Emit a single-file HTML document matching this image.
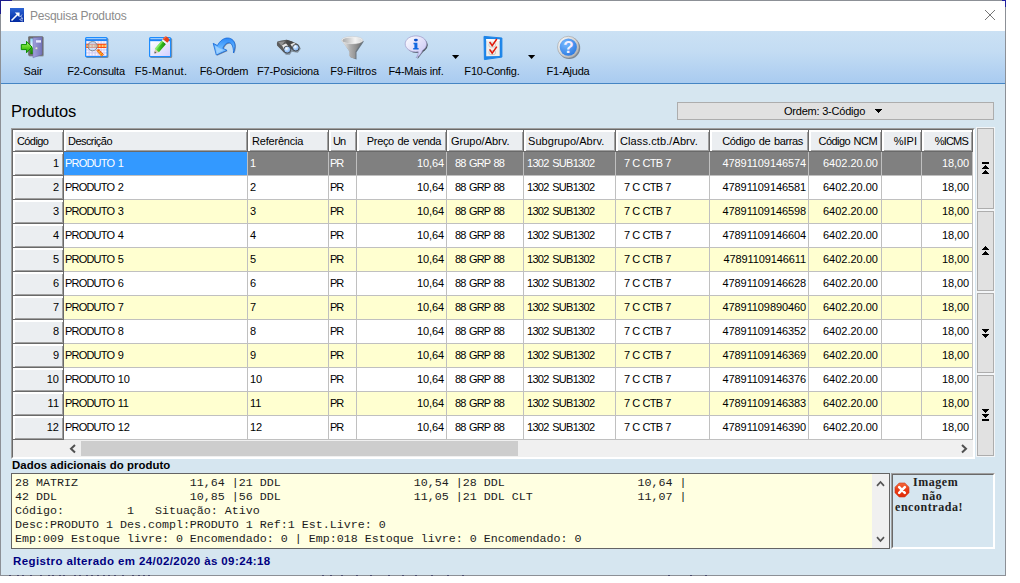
<!DOCTYPE html>
<html lang="pt-BR"><head><meta charset="utf-8"><title>Pesquisa Produtos</title>
<style>
html,body{margin:0;padding:0;background:#fff;}
body{width:1020px;height:583px;position:relative;overflow:hidden;font-family:"Liberation Sans",sans-serif;font-size:11px;color:#000;}
div{box-sizing:border-box;}
.abs{position:absolute;}
#win{position:absolute;left:0;top:0;width:1006px;height:576px;background:#d6e6f0;border:1px solid #8c9096;}
#title{position:absolute;left:1px;top:1px;width:1004px;height:30px;background:#fff;}
#title .t{position:absolute;left:29px;top:8px;font-size:12px;color:#8c8c8c;letter-spacing:-0.25px}
#tb{position:absolute;left:1px;top:31px;width:1004px;height:53px;background:linear-gradient(#cbe1f4 0%,#c3dcf3 40%,#a9cbf0 100%);border-bottom:1px solid #4585c4;}
.tbl{position:absolute;top:34px;font-size:11px;white-space:nowrap;transform:translateX(-50%);letter-spacing:-0.2px;}
#h1{position:absolute;left:11px;top:102px;font-size:16.5px;letter-spacing:-0.1px;line-height:18px}
#ordem{position:absolute;left:677px;top:102px;width:317px;height:18px;background:#e1e1e1;border:1px solid #adadad;}
#ordem span{position:absolute;left:106px;top:1px;line-height:15px;white-space:nowrap;letter-spacing:-0.22px}
#grid{position:absolute;left:11px;top:128px;width:964px;height:331px;background:#fff;border:1px solid;border-color:#a0a0a0 #fff #fff #a0a0a0;}
#grid:before{content:"";position:absolute;left:0;top:0;right:0;bottom:0;border:1px solid;border-color:#696969 #fff #fff #696969;}
.hdr{position:absolute;top:130px;height:22px;left:13px;}
.h{position:absolute;top:0;height:22px;background:#ebeef1;border-right:1px solid #696969;border-bottom:1px solid #696969;box-shadow:inset 2px 2px 0 #fff,inset -1px -1px 0 #a0a0a0;line-height:22px;padding-left:4px;white-space:nowrap;overflow:hidden;letter-spacing:-0.4px;}
.row{position:absolute;left:13px;width:960px;height:24px;}
.row.even{background:#fff;}
.row.odd{background:#ffffd0;}
.row.sel{background:#808080;color:#fff;}
.row .c{position:absolute;top:0;height:24px;line-height:23px;border-right:1px solid #c0c0c0;border-bottom:1px solid #c0c0c0;white-space:nowrap;overflow:hidden;padding:0 2px;letter-spacing:-0.4px;}
.row .c0{background:#ebeef1;color:#000;text-align:right;border-right:1px solid #696969;border-bottom:1px solid #696969;box-shadow:inset 2px 2px 0 #fff,inset -1px -1px 0 #a0a0a0;padding-right:4px;letter-spacing:0;}
.row .c1{padding-left:1px;letter-spacing:-0.8px;word-spacing:1.2px}
.sel .c1{background:#3399ff;}
.d{letter-spacing:-0.1px}
.row .c2{padding-left:2px;letter-spacing:0}
.row .c3{padding-left:1px;letter-spacing:-1.2px}
.row .c4{text-align:right;letter-spacing:-0.1px}
.row .c5{padding-left:8px;letter-spacing:-0.85px;word-spacing:1.2px}
.row .c6{padding-left:3px;letter-spacing:-0.7px;word-spacing:1.1px}
.row .c7{padding-left:8px;letter-spacing:-0.8px;word-spacing:0.8px}
.row .c8{text-align:right;letter-spacing:-0.1px}
.row .c9{text-align:right;letter-spacing:0;padding-right:3px}
.row .c11{text-align:right;padding-right:3px;letter-spacing:-0.1px}
.h.c4,.h.c8,.h.c9,.h.c10,.h.c11{text-align:right;padding-right:4px}
.h.c4,.h.c8{padding-right:5px}
.c0{left:0px;width:51px;}
.c1{left:51px;width:184px;}
.c2{left:235px;width:81px;}
.c3{left:316px;width:28px;}
.c4{left:344px;width:90px;}
.c5{left:434px;width:77px;}
.c6{left:511px;width:92px;}
.c7{left:603px;width:94px;}
.c8{left:697px;width:99px;}
.c9{left:796px;width:73px;}
.c10{left:869px;width:40px;}
.c11{left:909px;width:51px;}
#hs{position:absolute;left:13px;top:440px;width:960px;height:17px;background:#f0f0f0;}
#hs .thumb{position:absolute;left:68px;top:1px;width:437px;height:15px;background:#cdcdcd;}
#nbp{position:absolute;left:976px;top:127px;width:19px;height:330px;background:#f3f5f7;}
.nb{position:absolute;left:977px;width:17px;background:#e1e1e1;border:1px solid #adadad;}
#lbl{position:absolute;left:12px;top:459px;font-weight:bold;font-size:11.4px;line-height:13px;letter-spacing:0.05px}
#memo{position:absolute;left:11px;top:473px;width:879px;height:76px;background:#ffffe1;border:1px solid #646464;}
#memo pre{margin:0;position:absolute;left:3px;top:2px;font-family:"Liberation Mono",monospace;font-size:11.67px;line-height:14px;color:#1c1c1c}
#vs{position:absolute;left:872px;top:474px;width:17px;height:74px;background:#f0f0f0;}
#img{position:absolute;left:891px;top:473px;width:104px;height:76px;border:1px solid;border-color:#a0a0a0 #fff #fff #a0a0a0;}
#img:before{content:"";position:absolute;left:0;top:0;right:0;bottom:0;border:1px solid;border-color:#696969 #fff #fff #696969;}
#imgt .tx{position:absolute;font-family:"Liberation Serif",serif;font-weight:bold;font-size:12px;line-height:12px;white-space:nowrap;letter-spacing:0.55px;color:#222}
#status{position:absolute;left:13px;top:555px;font-weight:bold;color:#000080;font-size:11.5px;letter-spacing:0.4px;line-height:13px}
</style></head><body>
<div id="win"></div>
<div id="title"><div class="t">Pesquisa Produtos</div></div>
<svg class="abs" style="left:10px;top:8px" width="14" height="14" viewBox="0 0 14 14"><rect width="14" height="14" fill="url(#gIcon)"/><path d="M1.500,12.500 L8,6" stroke="#fff" stroke-width="1.600"/><path d="M4.800,4.500 L9.600,4.400 L9.500,9.200 Z" fill="#fff"/><path d="M10,9 l2,-2.500 M9.500,11.500 l3,-1 M10.500,12.500 l2.500,.5 M11.500,8.500 l1,3" stroke="#b8c8f0" stroke-width=".9"/></svg>
<svg class="abs" style="left:984px;top:9px" width="12" height="12" viewBox="0 0 12 12"><path d="M1,1 L11,11 M11,1 L1,11" stroke="#767676" stroke-width="1"/></svg>
<div class="abs" style="left:0;top:0;width:12px;height:1px;background:#1c1c8c"></div>
<div class="abs" style="left:0;top:0;width:1px;height:14px;background:#1c1c8c"></div>
<div class="abs" style="left:1002px;top:0;width:4px;height:1px;background:#2020a0"></div>
<div class="abs" style="left:1005px;top:0;width:1px;height:7px;background:#2020a0"></div>
<div id="tb">
<div class="tbl" style="left:32px">Sair</div>
<div class="tbl" style="left:95px">F2-Consulta</div>
<div class="tbl" style="left:160px;letter-spacing:0.25px">F5-Manut.</div>
<div class="tbl" style="left:223px">F6-Ordem</div>
<div class="tbl" style="left:287px">F7-Posiciona</div>
<div class="tbl" style="left:352.5px;letter-spacing:0px">F9-Filtros</div>
<div class="tbl" style="left:415px">F4-Mais inf.</div>
<div class="tbl" style="left:491px">F10-Config.</div>
<div class="tbl" style="left:567px">F1-Ajuda</div>
</div>
<svg width="0" height="0" style="position:absolute"><defs>
<linearGradient id="gGreen" x1="0" y1="0" x2="0" y2="1"><stop offset="0" stop-color="#b4f878"/><stop offset=".55" stop-color="#58d020"/><stop offset="1" stop-color="#28a808"/></linearGradient>
<linearGradient id="gDoor" x1="0" y1="0" x2="1" y2="0"><stop offset="0" stop-color="#a0a0dc"/><stop offset="1" stop-color="#7474b8"/></linearGradient>
<linearGradient id="gSky" x1="0" y1="0" x2="0" y2="1"><stop offset="0" stop-color="#8fd8ff"/><stop offset=".55" stop-color="#ffffff"/><stop offset=".6" stop-color="#30b010"/><stop offset="1" stop-color="#188000"/></linearGradient>
<linearGradient id="gWin" x1="0" y1="0" x2="1" y2="1"><stop offset="0" stop-color="#ffffff"/><stop offset="1" stop-color="#d4d0ff"/></linearGradient>
<linearGradient id="gBlueBar" x1="0" y1="0" x2="0" y2="1"><stop offset="0" stop-color="#7cc0ff"/><stop offset=".5" stop-color="#1070e8"/><stop offset="1" stop-color="#1c8cff"/></linearGradient>
<linearGradient id="gPencil" x1="0" y1="0" x2="1" y2="1"><stop offset="0" stop-color="#7ee860"/><stop offset=".5" stop-color="#38c020"/><stop offset="1" stop-color="#188808"/></linearGradient>
<linearGradient id="gUndo" x1="0" y1="0" x2="0" y2="1"><stop offset="0" stop-color="#2c88f8"/><stop offset=".45" stop-color="#58acff"/><stop offset="1" stop-color="#98d0ff"/></linearGradient>
<linearGradient id="gFunnel" x1="0" y1="0" x2="1" y2="0"><stop offset="0" stop-color="#f8f8f8"/><stop offset=".4" stop-color="#b0b0b0"/><stop offset="1" stop-color="#6c6c6c"/></linearGradient>
<linearGradient id="gFunnelTop" x1="0" y1="0" x2="1" y2="0"><stop offset="0" stop-color="#a8a8a8"/><stop offset=".65" stop-color="#f4f4f4"/><stop offset="1" stop-color="#d8d8d8"/></linearGradient>
<radialGradient id="gLens" cx=".4" cy=".35" r=".7"><stop offset="0" stop-color="#ffffff"/><stop offset=".5" stop-color="#a8d0ff"/><stop offset="1" stop-color="#78a8e8"/></radialGradient>
<linearGradient id="gBubble" x1="0" y1="0" x2="1" y2="1"><stop offset="0" stop-color="#ffffff"/><stop offset="1" stop-color="#c4c0f4"/></linearGradient>
<radialGradient id="gHelp" cx=".35" cy=".3" r=".8"><stop offset="0" stop-color="#78b8ff"/><stop offset="1" stop-color="#2878e0"/></radialGradient>
<linearGradient id="gRim" x1="0" y1="0" x2="1" y2="1"><stop offset="0" stop-color="#ffffff"/><stop offset="1" stop-color="#a8a8a8"/></linearGradient>
<linearGradient id="gIcon" x1="0" y1="0" x2="0" y2="1"><stop offset="0" stop-color="#2c64d4"/><stop offset="1" stop-color="#0028a0"/></linearGradient>
<filter id="sh" x="-20%" y="-20%" width="150%" height="150%"><feGaussianBlur stdDeviation="0.7"/></filter>
</defs></svg><svg class="abs" style="left:16px;top:32px" width="32" height="32" viewBox="0 0 32 32" >
<rect x="12.8" y="5" width="15" height="19.5" rx="1" fill="#555" opacity=".45" filter="url(#sh)"/>
<rect x="12.2" y="4.2" width="15" height="19.6" rx="1" fill="#6c6c6c"/>
<rect x="14.3" y="6.5" width="4" height="15.5" fill="url(#gSky)"/>
<path d="M17,5.8 L26,5 L26,22.5 L17,25.8 Z" fill="url(#gDoor)" stroke="#6c6cb0" stroke-width=".5"/>
<rect x="20" y="8.2" width="5" height="2.4" fill="#e8e8ff"/>
<circle cx="20.4" cy="16.3" r="1.2" fill="#e4e4e4" stroke="#8080a0" stroke-width=".4"/>
<path d="M5.3,12.6 L10.5,12.6 L10.5,9.3 L16,15 L10.5,20.8 L10.5,17.6 L5.3,17.6 Z" fill="url(#gGreen)" stroke="#0c9000" stroke-width="1" stroke-linejoin="round"/>
</svg><svg class="abs" style="left:80px;top:32px" width="32" height="32" viewBox="0 0 32 32" >
<rect x="6" y="6" width="22.5" height="20" rx="1.5" fill="#444" opacity=".5" filter="url(#sh)"/>
<rect x="5" y="5" width="22.6" height="20.2" rx="1.5" fill="#1c8cff"/>
<rect x="6.2" y="6.3" width="20.2" height="2.6" fill="url(#gBlueBar)"/>
<rect x="6.5" y="6.4" width="19.6" height=".8" fill="#c8e4ff"/>
<rect x="6.2" y="9" width="20.2" height="15" fill="#cfc8f0"/>
<rect x="6.6" y="9.3" width="2" height="2" fill="#fff" opacity=".85"/><rect x="9.6" y="9.3" width="2" height="2" fill="#fff" opacity=".85"/><rect x="12.6" y="9.3" width="2" height="2" fill="#fff" opacity=".85"/><rect x="15.6" y="9.3" width="2" height="2" fill="#fff" opacity=".85"/><rect x="18.6" y="9.3" width="2" height="2" fill="#fff" opacity=".85"/><rect x="21.6" y="9.3" width="2" height="2" fill="#fff" opacity=".85"/><rect x="24.4" y="9.3" width="2" height="2" fill="#fff" opacity=".85"/><rect x="6.6" y="12.3" width="2" height="2" fill="#fff" opacity=".85"/><rect x="9.6" y="12.3" width="2" height="2" fill="#fff" opacity=".85"/><rect x="12.6" y="12.3" width="2" height="2" fill="#fff" opacity=".85"/><rect x="15.6" y="12.3" width="2" height="2" fill="#fff" opacity=".85"/><rect x="18.6" y="12.3" width="2" height="2" fill="#fff" opacity=".85"/><rect x="21.6" y="12.3" width="2" height="2" fill="#fff" opacity=".85"/><rect x="24.4" y="12.3" width="2" height="2" fill="#fff" opacity=".85"/><rect x="6.6" y="15.4" width="2" height="2" fill="#fff" opacity=".85"/><rect x="9.6" y="15.4" width="2" height="2" fill="#fff" opacity=".85"/><rect x="12.6" y="15.4" width="2" height="2" fill="#fff" opacity=".85"/><rect x="15.6" y="15.4" width="2" height="2" fill="#fff" opacity=".85"/><rect x="18.6" y="15.4" width="2" height="2" fill="#fff" opacity=".85"/><rect x="21.6" y="15.4" width="2" height="2" fill="#fff" opacity=".85"/><rect x="24.4" y="15.4" width="2" height="2" fill="#fff" opacity=".85"/><rect x="6.6" y="18.4" width="2" height="2" fill="#fff" opacity=".85"/><rect x="9.6" y="18.4" width="2" height="2" fill="#fff" opacity=".85"/><rect x="12.6" y="18.4" width="2" height="2" fill="#fff" opacity=".85"/><rect x="15.6" y="18.4" width="2" height="2" fill="#fff" opacity=".85"/><rect x="18.6" y="18.4" width="2" height="2" fill="#fff" opacity=".85"/><rect x="21.6" y="18.4" width="2" height="2" fill="#fff" opacity=".85"/><rect x="24.4" y="18.4" width="2" height="2" fill="#fff" opacity=".85"/><rect x="6.6" y="21.4" width="2" height="2" fill="#fff" opacity=".85"/><rect x="9.6" y="21.4" width="2" height="2" fill="#fff" opacity=".85"/><rect x="12.6" y="21.4" width="2" height="2" fill="#fff" opacity=".85"/><rect x="15.6" y="21.4" width="2" height="2" fill="#fff" opacity=".85"/><rect x="18.6" y="21.4" width="2" height="2" fill="#fff" opacity=".85"/><rect x="21.6" y="21.4" width="2" height="2" fill="#fff" opacity=".85"/><rect x="24.4" y="21.4" width="2" height="2" fill="#fff" opacity=".85"/>
<rect x="6.2" y="11.8" width="20.2" height="4.2" fill="#ff4a10"/>
<g fill="#ffd070"><rect x="6.6" y="12.8" width="2" height="2.2"/><rect x="9.6" y="12.8" width="2" height="2.2"/><rect x="12.6" y="12.8" width="2" height="2.2"/><rect x="15.6" y="12.8" width="2" height="2.2"/><rect x="18.6" y="12.8" width="2" height="2.2"/><rect x="21.6" y="12.8" width="2" height="2.2"/><rect x="24.4" y="12.8" width="2" height="2.2"/></g>
<circle cx="12.6" cy="14.2" r="4.6" fill="#b8e0ff" fill-opacity=".55" stroke="#808890" stroke-width="1"/>
<path d="M16.6,18.6 L18.4,17.2 L23.6,22.6 L21.6,24.4 Z" fill="#ffb020" stroke="#e04808" stroke-width=".6"/>
<path d="M18,19 L19.6,17.8 M19.6,20.8 L21.2,19.4 M21.2,22.6 L22.8,21.2" stroke="#e83808" stroke-width=".9"/>
</svg><svg class="abs" style="left:144px;top:32px" width="32" height="32" viewBox="0 0 32 32" >
<rect x="6" y="6" width="22.2" height="20" rx="1.5" fill="#444" opacity=".5" filter="url(#sh)"/>
<rect x="5" y="5" width="22.2" height="20.2" rx="1.5" fill="#1c8cff"/>
<rect x="6.2" y="6.3" width="19.8" height="2.8" fill="url(#gBlueBar)"/>
<rect x="6.5" y="6.4" width="19.2" height=".8" fill="#c8e4ff"/>
<rect x="6.2" y="9.2" width="19.8" height="14.8" fill="url(#gWin)"/>
<g transform="translate(11.2,20.6) rotate(-50)">
<path d="M-1,0 L2.600,-2.500 L2.600,2.500 Z" fill="#e0c8a8"/>
<path d="M-1.200,0 L0.600,-1.200 L0.600,1.200 Z" fill="#505050"/>
<rect x="2.600" y="-2.700" width="11" height="5.400" fill="url(#gPencil)"/>
<rect x="2.600" y="-2.700" width="11" height="1.800" fill="#98f478" opacity=".7"/>
<rect x="13.600" y="-2.800" width="1.800" height="5.600" fill="#f4f4f4"/>
<path d="M15.400,-2.900 L17.600,-2.900 Q19.800,-2.900 19.800,0 Q19.800,2.900 17.600,2.900 L15.400,2.900 Z" fill="#e84018"/>
<path d="M15.400,-2.900 L17.600,-2.900 Q19,-2.900 19.500,-1.500 L15.400,-1.500 Z" fill="#f87048" opacity=".8"/>
</g>
</svg><svg class="abs" style="left:208px;top:32px" width="32" height="32" viewBox="0 0 32 32" >
<g transform="translate(.8,.8)" opacity=".45" filter="url(#sh)"><path d="M5.2,11.3 L9.4,13.6 C12,8.500 16,6 19.500,6 C24.500,6 27.300,10 27,14.500 C26.800,17 26.300,19.200 25.500,21 C25.600,17.500 25,14.200 23.600,12.300 C22.300,10.500 20.300,10.300 18.500,11.400 C17,12.300 15.800,14 14.800,16.300 L19,18.300 L8.300,23 Z" fill="#223"/></g>
<path d="M5.2,11.3 L9.4,13.6 C12,8.500 16,6 19.500,6 C24.500,6 27.300,10 27,14.500 C26.800,17 26.300,19.200 25.500,21 C25.600,17.500 25,14.200 23.600,12.300 C22.300,10.500 20.300,10.300 18.500,11.400 C17,12.300 15.800,14 14.800,16.300 L19,18.300 L8.300,23 Z" fill="url(#gUndo)" stroke="#1468d8" stroke-width=".8" stroke-linejoin="round"/>
<path d="M6.800,13.500 L9.200,21 L15.500,18 L12,16.500 Z" fill="#a8d4ff" opacity=".8"/>
</svg><svg class="abs" style="left:272px;top:32px" width="32" height="32" viewBox="0 0 32 32" >
<g opacity=".4" filter="url(#sh)" transform="translate(.8,.8)"><path d="M5,10 L14,8 L19.500,9.500 L26,12 L28,16 L25,20 L19,19 L17,22 L13,22 L6,14 Z" fill="#222"/></g>
<path d="M5.400,9.600 Q9,8.200 14.600,7.800 L21,10 L16.500,14 L12,20.500 L5,13.500 Q4.600,11 5.400,9.600 Z" fill="#5c5c5c"/>
<path d="M14.600,7.800 L19.500,9.300 L26,12.300 L21.800,18.700 L17,15 L14,11 Z" fill="#484848"/>
<path d="M6.200,10 L13,9.300 L9.500,13.800 Z" fill="#a0a0a0" opacity=".8"/>
<path d="M10,13.200 L14,11.500 L17.800,15.400 L13,19.800 Z" fill="#e8e8e8"/>
<path d="M18.500,12.200 L22,10.800 L26,13.500 L22,18 Z" fill="#e4e4e4"/>
<circle cx="15.200" cy="17.600" r="3.500" fill="url(#gLens)" stroke="#404040" stroke-width=".9"/>
<circle cx="23.800" cy="15.700" r="3.300" fill="url(#gLens)" stroke="#404040" stroke-width=".9"/>
</svg><svg class="abs" style="left:336px;top:32px" width="32" height="32" viewBox="0 0 32 32" >
<g opacity=".55" filter="url(#sh)" transform="translate(1,1)"><path d="M5.400,8.200 L13.200,19.200 L13.200,24 L19.500,26.500 L19.500,19.200 L27,8.200 Z" fill="#222"/></g>
<path d="M5.400,8.200 L13.200,19.200 L13.200,24 Q16,26.800 19.500,26.500 L19.500,19.200 L27,8.200 Z" fill="url(#gFunnel)"/>
<ellipse cx="16.200" cy="8.200" rx="10.800" ry="3.800" fill="#f0f0f0" stroke="#c0c0c0" stroke-width=".4"/>
<ellipse cx="16.200" cy="8.400" rx="9.800" ry="3" fill="url(#gFunnelTop)"/>
</svg><svg class="abs" style="left:398px;top:32px" width="64" height="32" viewBox="0 0 64 32" >
<g opacity=".6" filter="url(#sh)" transform="translate(1.2,1.2)"><ellipse cx="17.900" cy="11.900" rx="10.700" ry="8"/><path d="M20,18 L18.300,25.700 L26,16 Z"/></g>
<path d="M17.900,3.900 C24,3.900 28.600,7.400 28.600,11.900 C28.600,14.600 27,16.800 24.600,18.300 C23.500,21.500 21.500,24.200 18,25.800 C19.600,23.800 20.300,21.800 20.300,19.800 C19.500,19.900 18.700,19.900 17.900,19.900 C12,19.900 7.200,16.400 7.200,11.900 C7.200,7.400 12,3.900 17.900,3.900 Z" fill="url(#gBubble)" stroke="#9c98c8" stroke-width=".7"/>
<ellipse cx="17.900" cy="8.100" rx="2" ry="1.300" fill="#0c50c8"/>
<path d="M15.500,10.800 L19.400,10.800 L19.400,16 L20.600,16 L20.600,17.600 L15.200,17.600 L15.200,16 L16.400,16 L16.400,12.300 L15.500,12.300 Z" fill="#1068e0"/>
<path d="M54,23 L61.200,23 L57.600,27 Z" fill="#000"/>
</svg><svg class="abs" style="left:474px;top:32px" width="64" height="32" viewBox="0 0 64 32" >
<path d="M10,4.400 L27.900,6 L27.900,25.100 L10.400,27.600 Z" fill="#1c84e8" stroke="#1c84e8" stroke-width="1" stroke-linejoin="round"/>
<path d="M12.200,6.900 L25.700,7.400 L25.700,24 L12.200,24.300 Z" fill="#f6efe8"/>
<path d="M12.200,6.900 L25.700,7.400 L25.700,9 L12.200,8.500 Z" fill="#fff"/>
<rect x="15" y="11" width="6.500" height="4" rx="1.500" fill="none" stroke="#bbb" stroke-width=".7"/>
<rect x="15" y="18.500" width="6.500" height="4" rx="1.500" fill="none" stroke="#bbb" stroke-width=".7"/>
<path d="M15.600,9.800 L18.200,13.600 L22.800,7" fill="none" stroke="#e01808" stroke-width="1.500"/>
<path d="M15.600,17.300 L18.200,21.200 L22.800,14.600" fill="none" stroke="#e01808" stroke-width="1.500"/>
<path d="M54,23 L61.200,23 L57.600,27 Z" fill="#000"/>
</svg><svg class="abs" style="left:551px;top:32px" width="32" height="32" viewBox="0 0 32 32" >
<circle cx="18.200" cy="16" r="11" fill="#222" opacity=".45" filter="url(#sh)"/>
<circle cx="17.300" cy="15.100" r="10.800" fill="url(#gRim)" stroke="#909090" stroke-width=".5"/>
<circle cx="17.300" cy="15.100" r="8.600" fill="url(#gHelp)"/>
<text x="17.400" y="21.200" font-family="Liberation Sans, sans-serif" font-weight="bold" font-size="17" fill="#f4f0ff" text-anchor="middle">?</text>
</svg>
<div id="h1">Produtos</div>
<div id="ordem"><span>Ordem: 3-Código</span></div>
<svg class="abs" style="left:875px;top:109px" width="7" height="4" viewBox="0 0 7 4" shape-rendering="crispEdges"><path d="M0,0h7v1h-1v1h-1v1h-1v1h-1v-1h-1v-1h-1v-1h-1z"/></svg>
<div id="grid"></div>
<div class="hdr"><div class="h c0" style="letter-spacing:-0.6px;word-spacing:0px">Código</div><div class="h c1" style="letter-spacing:-0.55px;word-spacing:0px">Descrição</div><div class="h c2" style="letter-spacing:-0.2px;word-spacing:0px">Referência</div><div class="h c3" style="letter-spacing:-1px;word-spacing:0px">Un</div><div class="h c4" style="letter-spacing:-0.35px;word-spacing:1px">Preço de venda</div><div class="h c5" style="letter-spacing:0px;word-spacing:0px">Grupo/Abrv.</div><div class="h c6" style="letter-spacing:0.05px;word-spacing:0px">Subgrupo/Abrv.</div><div class="h c7" style="letter-spacing:0.1px;word-spacing:0px">Class.ctb./Abrv.</div><div class="h c8" style="letter-spacing:-0.35px;word-spacing:1px">Código de barras</div><div class="h c9" style="letter-spacing:-0.55px;word-spacing:1px">Código NCM</div><div class="h c10" style="letter-spacing:0px;word-spacing:0px">%IPI</div><div class="h c11" style="letter-spacing:-0.8px;word-spacing:0px">%ICMS</div></div>
<div class="row sel" style="top:152px"><div class="c c0">1</div><div class="c c1">PRODUTO <span class=d>1</span></div><div class="c c2">1</div><div class="c c3">PR</div><div class="c c4">10,64</div><div class="c c5">88 GRP 88</div><div class="c c6">1302 SUB1302</div><div class="c c7">7 C CTB 7</div><div class="c c8">47891109146574</div><div class="c c9">6402.20.00</div><div class="c c10"></div><div class="c c11">18,00</div></div>
<div class="row even" style="top:176px"><div class="c c0">2</div><div class="c c1">PRODUTO <span class=d>2</span></div><div class="c c2">2</div><div class="c c3">PR</div><div class="c c4">10,64</div><div class="c c5">88 GRP 88</div><div class="c c6">1302 SUB1302</div><div class="c c7">7 C CTB 7</div><div class="c c8">47891109146581</div><div class="c c9">6402.20.00</div><div class="c c10"></div><div class="c c11">18,00</div></div>
<div class="row odd" style="top:200px"><div class="c c0">3</div><div class="c c1">PRODUTO <span class=d>3</span></div><div class="c c2">3</div><div class="c c3">PR</div><div class="c c4">10,64</div><div class="c c5">88 GRP 88</div><div class="c c6">1302 SUB1302</div><div class="c c7">7 C CTB 7</div><div class="c c8">47891109146598</div><div class="c c9">6402.20.00</div><div class="c c10"></div><div class="c c11">18,00</div></div>
<div class="row even" style="top:224px"><div class="c c0">4</div><div class="c c1">PRODUTO <span class=d>4</span></div><div class="c c2">4</div><div class="c c3">PR</div><div class="c c4">10,64</div><div class="c c5">88 GRP 88</div><div class="c c6">1302 SUB1302</div><div class="c c7">7 C CTB 7</div><div class="c c8">47891109146604</div><div class="c c9">6402.20.00</div><div class="c c10"></div><div class="c c11">18,00</div></div>
<div class="row odd" style="top:248px"><div class="c c0">5</div><div class="c c1">PRODUTO <span class=d>5</span></div><div class="c c2">5</div><div class="c c3">PR</div><div class="c c4">10,64</div><div class="c c5">88 GRP 88</div><div class="c c6">1302 SUB1302</div><div class="c c7">7 C CTB 7</div><div class="c c8">47891109146611</div><div class="c c9">6402.20.00</div><div class="c c10"></div><div class="c c11">18,00</div></div>
<div class="row even" style="top:272px"><div class="c c0">6</div><div class="c c1">PRODUTO <span class=d>6</span></div><div class="c c2">6</div><div class="c c3">PR</div><div class="c c4">10,64</div><div class="c c5">88 GRP 88</div><div class="c c6">1302 SUB1302</div><div class="c c7">7 C CTB 7</div><div class="c c8">47891109146628</div><div class="c c9">6402.20.00</div><div class="c c10"></div><div class="c c11">18,00</div></div>
<div class="row odd" style="top:296px"><div class="c c0">7</div><div class="c c1">PRODUTO <span class=d>7</span></div><div class="c c2">7</div><div class="c c3">PR</div><div class="c c4">10,64</div><div class="c c5">88 GRP 88</div><div class="c c6">1302 SUB1302</div><div class="c c7">7 C CTB 7</div><div class="c c8">47891109890460</div><div class="c c9">6402.20.00</div><div class="c c10"></div><div class="c c11">18,00</div></div>
<div class="row even" style="top:320px"><div class="c c0">8</div><div class="c c1">PRODUTO <span class=d>8</span></div><div class="c c2">8</div><div class="c c3">PR</div><div class="c c4">10,64</div><div class="c c5">88 GRP 88</div><div class="c c6">1302 SUB1302</div><div class="c c7">7 C CTB 7</div><div class="c c8">47891109146352</div><div class="c c9">6402.20.00</div><div class="c c10"></div><div class="c c11">18,00</div></div>
<div class="row odd" style="top:344px"><div class="c c0">9</div><div class="c c1">PRODUTO <span class=d>9</span></div><div class="c c2">9</div><div class="c c3">PR</div><div class="c c4">10,64</div><div class="c c5">88 GRP 88</div><div class="c c6">1302 SUB1302</div><div class="c c7">7 C CTB 7</div><div class="c c8">47891109146369</div><div class="c c9">6402.20.00</div><div class="c c10"></div><div class="c c11">18,00</div></div>
<div class="row even" style="top:368px"><div class="c c0">10</div><div class="c c1">PRODUTO <span class=d>10</span></div><div class="c c2">10</div><div class="c c3">PR</div><div class="c c4">10,64</div><div class="c c5">88 GRP 88</div><div class="c c6">1302 SUB1302</div><div class="c c7">7 C CTB 7</div><div class="c c8">47891109146376</div><div class="c c9">6402.20.00</div><div class="c c10"></div><div class="c c11">18,00</div></div>
<div class="row odd" style="top:392px"><div class="c c0">11</div><div class="c c1">PRODUTO <span class=d>11</span></div><div class="c c2">11</div><div class="c c3">PR</div><div class="c c4">10,64</div><div class="c c5">88 GRP 88</div><div class="c c6">1302 SUB1302</div><div class="c c7">7 C CTB 7</div><div class="c c8">47891109146383</div><div class="c c9">6402.20.00</div><div class="c c10"></div><div class="c c11">18,00</div></div>
<div class="row even" style="top:416px"><div class="c c0">12</div><div class="c c1">PRODUTO <span class=d>12</span></div><div class="c c2">12</div><div class="c c3">PR</div><div class="c c4">10,64</div><div class="c c5">88 GRP 88</div><div class="c c6">1302 SUB1302</div><div class="c c7">7 C CTB 7</div><div class="c c8">47891109146390</div><div class="c c9">6402.20.00</div><div class="c c10"></div><div class="c c11">18,00</div></div>
<div id="hs"><div class="thumb"></div></div>
<svg class="abs" style="left:64px;top:440px" width="17" height="17" viewBox="0 0 17 17"><path d="M11,5 L7,8.700 L11,12.400" fill="none" stroke="#505050" stroke-width="2"/></svg>
<svg class="abs" style="left:956px;top:440px" width="17" height="17" viewBox="0 0 17 17"><path d="M6,5 L10,8.700 L6,12.400" fill="none" stroke="#505050" stroke-width="2"/></svg>
<div id="nbp"></div>
<div class="nb" style="top:128px;height:81px"></div>
<div class="nb" style="top:211px;height:80px"></div>
<div class="nb" style="top:293px;height:80px"></div>
<div class="nb" style="top:375px;height:81px"></div>
<svg class="abs" style="left:977px;top:128px" width="17" height="330" viewBox="977 128 17 330" shape-rendering="crispEdges">
<rect x="982" y="162" width="7" height="2"/>
<path d="M985,165h1v1h1v1h1v1h1v1h-7v-1h1v-1h1v-1h1z"/>
<path d="M985,170h1v1h1v1h1v1h1v1h-7v-1h1v-1h1v-1h1z"/>
<path d="M985,246h1v1h1v1h1v1h1v1h-7v-1h1v-1h1v-1h1z"/>
<path d="M985,251h1v1h1v1h1v1h1v1h-7v-1h1v-1h1v-1h1z"/>
<path d="M982,329h7v1h-1v1h-1v1h-1v1h-1v-1h-1v-1h-1v-1h-1z"/>
<path d="M982,334h7v1h-1v1h-1v1h-1v1h-1v-1h-1v-1h-1v-1h-1z"/>
<path d="M982,409h7v1h-1v1h-1v1h-1v1h-1v-1h-1v-1h-1v-1h-1z"/>
<path d="M982,414h7v1h-1v1h-1v1h-1v1h-1v-1h-1v-1h-1v-1h-1z"/>
<rect x="982" y="419" width="7" height="2"/>
</svg>
<div id="lbl">Dados adicionais do produto</div>
<div id="memo"><pre>28 MATRIZ                11,64 |21 DDL                   10,54 |28 DDL                   10,64 |
42 DDL                   10,85 |56 DDL                   11,05 |21 DDL CLT               11,07 |
Código:         1   Situação: Ativo
Desc:PRODUTO 1 Des.compl:PRODUTO 1 Ref:1 Est.Livre: 0
Emp:009 Estoque livre: 0 Encomendado: 0 | Emp:018 Estoque livre: 0 Encomendado: 0</pre></div>
<div id="vs"></div>
<svg class="abs" style="left:872px;top:474px" width="17" height="74" viewBox="0 0 17 74"><path d="M5,11.800 L8.500,8 L12,11.800" fill="none" stroke="#555" stroke-width="1.700"/><path d="M5,63.200 L8.500,67 L12,63.200" fill="none" stroke="#555" stroke-width="1.700"/></svg>
<div id="img"></div>
<svg class="abs" style="left:894px;top:482px" width="16" height="16" viewBox="0 0 16 16"><defs><linearGradient id="gErr" x1="0" y1="0" x2="0" y2="1"><stop offset="0" stop-color="#f46a3c"/><stop offset=".5" stop-color="#e83a14"/><stop offset="1" stop-color="#e02c08"/></linearGradient></defs><path d="M5.200,1 L10.800,1 L15,5.200 L15,10.800 L10.800,15 L5.200,15 L1,10.800 L1,5.200 Z" fill="url(#gErr)" stroke="#d03818" stroke-width=".6"/><path d="M5.200,5.200 L10.800,10.800 M10.800,5.200 L5.200,10.800" stroke="#fff" stroke-width="2.600" stroke-linecap="round"/></svg>
<div id="imgt"><div class="tx" style="left:913px;top:476px">Imagem</div><div class="tx" style="left:922px;top:490px">não</div><div class="tx" style="left:895px;top:501px">encontrada!</div></div>
<div class="abs" style="left:9px;top:575px;width:2px;height:1px;background:#4a4a6a;box-shadow:8px 0 0 #4a4a6a,13px 0 0 #4a4a6a,21px 0 0 #4a4a6a,31px 0 0 #4a4a6a,39px 0 0 #4a4a6a,43px 0 0 #4a4a6a,50px 0 0 #4a4a6a,54px 0 0 #4a4a6a,65px 0 0 #4a4a6a,70px 0 0 #4a4a6a,77px 0 0 #4a4a6a,82px 0 0 #4a4a6a,88px 0 0 #4a4a6a,94px 0 0 #4a4a6a,99px 0 0 #4a4a6a,105px 0 0 #4a4a6a,113px 0 0 #4a4a6a,123px 0 0 #4a4a6a,129px 0 0 #4a4a6a,134px 0 0 #4a4a6a,139px 0 0 #4a4a6a,313px 0 0 #4a4a6a,321px 0 0 #4a4a6a,332px 0 0 #4a4a6a,347px 0 0 #4a4a6a,361px 0 0 #4a4a6a,379px 0 0 #4a4a6a,393px 0 0 #4a4a6a,406px 0 0 #4a4a6a,422px 0 0 #4a4a6a,438px 0 0 #4a4a6a,453px 0 0 #4a4a6a,659px 0 0 #4a4a6a,681px 0 0 #4a4a6a,696px 0 0 #4a4a6a"></div>
<div id="status">Registro alterado em 24/02/2020 às 09:24:18</div>
</body></html>
